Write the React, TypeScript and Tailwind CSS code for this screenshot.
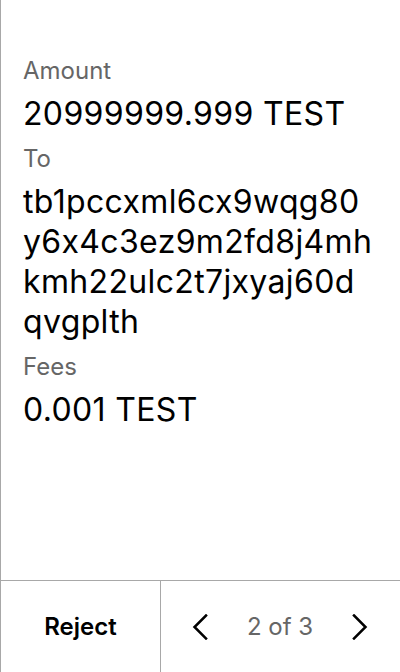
const Field = ({ label, lines }: { label: string; lines: string[] }) => (
  <div className="flex flex-col">
    <span className="text-[24px] leading-[30px] text-[#666666]">{label}</span>
    <span className="mt-2 text-[32px] leading-[40px] tracking-[0.35px] text-black break-all">
      {lines.map((l, i) => (
        <span key={i} className="block">
          {l}
        </span>
      ))}
    </span>
  </div>
)

const Chevron = ({ dir }: { dir: 'left' | 'right' }) => (
  <svg width="16" height="26" viewBox="0 0 16 26" fill="none">
    <path
      d={dir === 'left' ? 'M14 1.5 2.5 13 14 24.5' : 'M2 1.5 13.5 13 2 24.5'}
      stroke="black"
      strokeWidth="2.5"
      strokeLinecap="square"
    />
  </svg>
)

const App = () => {
  return (
    <div
      className="flex flex-col h-[672px] w-[400px] bg-white border-l border-[#a8a8a8] [font-feature-settings:'calt'_0]"
      style={{ fontFamily: 'Inter, "Noto Sans", sans-serif' }}
    >
      <div className="flex-1 flex flex-col gap-[10px] pt-14 pl-[22px] pr-6">
        <Field label="Amount" lines={['20999999.999 TEST']} />
        <Field
          label="To"
          lines={[
            'tb1pccxml6cx9wqg80',
            'y6x4c3ez9m2fd8j4mh',
            'kmh22ulc2t7jxyaj60d',
            'qvgplth',
          ]}
        />
        <Field label="Fees" lines={['0.001 TEST']} />
      </div>

      <div className="flex h-[92px] border-t border-[#a8a8a8]">
        <button className="w-[160px] border-r border-[#a8a8a8] text-[24px] font-semibold text-black">
          Reject
        </button>
        <div className="flex-1 flex items-center justify-between pl-[31px] pr-[32px]">
          <Chevron dir="left" />
          <span className="text-[24px] text-[#666666]">2 of 3</span>
          <Chevron dir="right" />
        </div>
      </div>
    </div>
  )
}

export default App
